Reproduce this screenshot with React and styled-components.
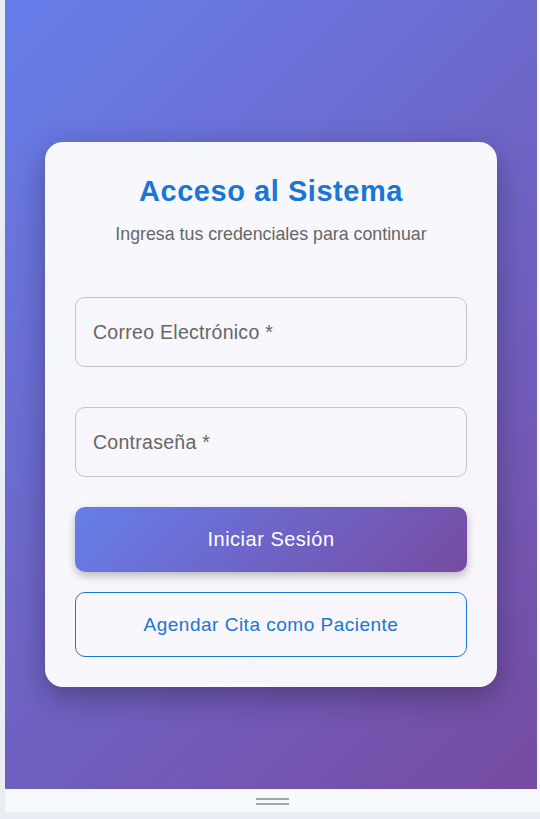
import React from "react";
import styled, { createGlobalStyle } from "styled-components";

const Global = createGlobalStyle`
  html, body { margin: 0; padding: 0; background: #edf1f7; }
  body { font-family: "Liberation Sans", Arial, sans-serif; }
  * { box-sizing: border-box; }
`;

const Page = styled.div`
  width: 540px;
  height: 819px;
  padding-left: 5px;
  padding-bottom: 7px;
  background: #e9eef5;
`;

const Frame = styled.div`
  height: 812px;
  display: flex;
  flex-direction: column;
  background: #f8f9fd;
`;

const Screen = styled.div`
  height: 789px;
  margin-right: 3px;
  background: linear-gradient(135deg, #667eea 0%, #764ba2 100%);
  display: flex;
  justify-content: center;
  align-items: flex-start;
  padding-top: 142px;
`;

const Card = styled.div`
  width: 452px;
  background: rgba(255, 255, 255, 0.95);
  border-radius: 18px;
  box-shadow: 0 10px 30px rgba(0, 0, 0, 0.3);
  padding: 32px 30px 30px;
  display: flex;
  flex-direction: column;
`;

const Title = styled.h1`
  margin: 0;
  text-align: center;
  color: #1976d2;
  font-size: 29px;
  line-height: 34px;
  font-weight: 700;
  letter-spacing: 0.55px;
`;

const Subtitle = styled.p`
  margin: 16px 0 0;
  text-align: center;
  color: #666;
  font-size: 17.8px;
  line-height: 20px;
`;

const Form = styled.form`
  margin-top: 53px;
  display: flex;
  flex-direction: column;
`;

const Field = styled.input`
  width: 100%;
  height: 70px;
  border: 1px solid #c4c4c4;
  border-radius: 10px;
  background: transparent;
  padding: 0 17px;
  font-family: inherit;
  font-size: 19.5px;
  letter-spacing: 0.28px;
  color: #333;
  outline: none;
  margin-bottom: ${(p) => p.$gap}px;
  &::placeholder { color: #666; opacity: 1; }
`;

const PrimaryButton = styled.button`
  height: 65px;
  border: none;
  border-radius: 10px;
  background: linear-gradient(135deg, #667eea 0%, #764ba2 100%);
  color: #fff;
  font-family: inherit;
  font-size: 20px;
  font-weight: 500;
  letter-spacing: 0.5px;
  box-shadow: 0 4px 8px rgba(0, 0, 0, 0.25);
  cursor: pointer;
`;

const OutlineButton = styled.button`
  margin-top: 20px;
  height: 65px;
  border: 1px solid #1976d2;
  border-radius: 10px;
  background: transparent;
  color: #1976d2;
  font-family: inherit;
  font-size: 19px;
  letter-spacing: 0.5px;
  cursor: pointer;
`;

const BottomBar = styled.div`
  height: 23px;
  display: flex;
  flex-direction: column;
  align-items: center;
  padding-top: 9px;
  gap: 3px;
`;

const HandleLine = styled.span`
  display: block;
  width: 33px;
  height: 2px;
  background: #a6a6a6;
`;

export default function App() {
  return (
    <>
      <Global />
      <Page>
        <Frame>
          <Screen>
            <Card>
              <Title>Acceso al Sistema</Title>
              <Subtitle>Ingresa tus credenciales para continuar</Subtitle>
              <Form onSubmit={(e) => e.preventDefault()}>
                <Field type="email" placeholder="Correo Electrónico *" $gap={40} />
                <Field type="password" placeholder="Contraseña *" $gap={30} />
                <PrimaryButton type="submit">Iniciar Sesión</PrimaryButton>
                <OutlineButton type="button">Agendar Cita como Paciente</OutlineButton>
              </Form>
            </Card>
          </Screen>
          <BottomBar>
            <HandleLine />
            <HandleLine />
          </BottomBar>
        </Frame>
      </Page>
    </>
  );
}
